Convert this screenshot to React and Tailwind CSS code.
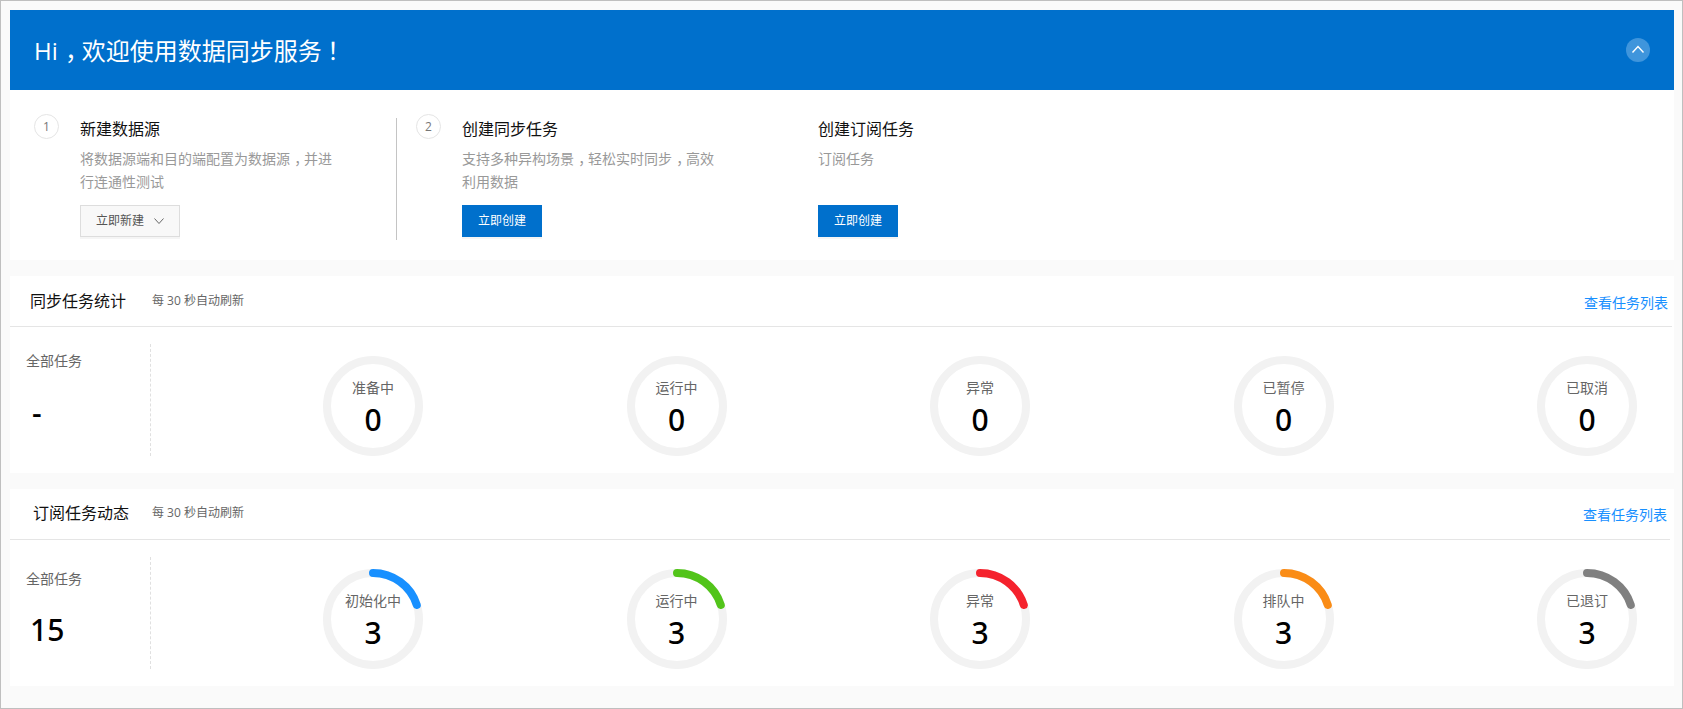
import React from "react";

function ChevronDown() {
  return (
    <svg width="10" height="10" viewBox="0 0 10 10" fill="none" stroke="#666" strokeWidth="1">
      <path d="M0.5 2.5 L5 7.5 L9.5 2.5" />
    </svg>
  );
}

function ChevronUp() {
  return (
    <svg width="14" height="14" viewBox="0 0 14 14" fill="none" stroke="#fff" strokeWidth="1.4" className="-mt-[1px]">
      <path d="M1.5 9.5 L7 3.5 L12.5 9.5" />
    </svg>
  );
}

function Comma() {
  return <span className="inline-block pl-[0.3em] pr-[0.2em] [font-feature-settings:'halt']">，</span>;
}

function Ring({ label, value, color }) {
  return (
    <div className="relative w-[100px] h-[100px] shrink-0 text-center">
      <svg className="absolute inset-0" width="100" height="100" viewBox="0 0 100 100">
        <circle cx="50" cy="50" r="46" fill="none" stroke="#f2f2f2" strokeWidth="8" />
        {color && (
          <circle
            cx="50"
            cy="50"
            r="46"
            fill="none"
            stroke={color}
            strokeWidth="8"
            strokeLinecap="round"
            strokeDasharray="57.8 289"
            transform="rotate(-90 50 50)"
          />
        )}
      </svg>
      <div className="relative pt-[22px] flex flex-col items-center">
        <div className="text-[14px] leading-[20px] text-[#666]">{label}</div>
        <div className="mt-[4px] font-['Noto_Sans',sans-serif] font-medium text-[30px] leading-[36px] text-black">{value}</div>
      </div>
    </div>
  );
}

function Section({ title, titleClass, headShift, linkClass, lineMr, total, totalPl, labelMt, totalMt, rings }) {
  return (
    <section className="bg-white mt-[16px]">
      <div className={"h-[51px] flex items-center border-b border-[#e5e5e5] " + lineMr}>
        <div className={"text-[16px] text-[#111] w-[142px] whitespace-nowrap " + titleClass + " " + headShift}>{title}</div>
        <div className={"text-[12px] text-[#666] whitespace-nowrap " + headShift}>每 30 秒自动刷新</div>
        <a className={"ml-auto text-[14px] text-[#1890ff] whitespace-nowrap " + linkClass}>查看任务列表</a>
      </div>
      <div className="h-[146px] pt-[17px] flex">
        <div className="w-[141px] h-[112px] border-r border-dashed border-[#e0e0e0] pl-[16px]">
          <div className={"text-[14px] leading-[20px] text-[#666] " + labelMt}>全部任务</div>
          <div className={"font-['Noto_Sans',sans-serif] font-medium text-[30px] leading-[36px] text-black " + totalMt + " " + totalPl}>{total}</div>
        </div>
        <div className="flex-1 flex justify-between pl-[172px] pr-[37px] pt-[12px]">
          {rings.map((r) => (
            <Ring key={r.label} {...r} />
          ))}
        </div>
      </div>
    </section>
  );
}

function Step({ n }) {
  return (
    <div className="w-[25px] h-[25px] rounded-full border border-[#e5e5e5] flex items-center justify-center text-[12px] text-[#777] shrink-0">
      {n}
    </div>
  );
}

function Task({ title, desc, button }) {
  return (
    <div>
      <div className="mt-[3px] text-[16px] leading-[24px] text-[#111]">{title}</div>
      <div className="mt-[6px] h-[46px] whitespace-nowrap text-[14px] leading-[23px] text-[#999]">{desc}</div>
      <div className="mt-[12px]">{button}</div>
    </div>
  );
}

export default function App() {
  const s1 = [
    { label: "准备中", value: 0 },
    { label: "运行中", value: 0 },
    { label: "异常", value: 0 },
    { label: "已暂停", value: 0 },
    { label: "已取消", value: 0 },
  ];
  const s2 = [
    { label: "初始化中", value: 3, color: "#1890ff" },
    { label: "运行中", value: 3, color: "#52c41a" },
    { label: "异常", value: 3, color: "#f5222d" },
    { label: "排队中", value: 3, color: "#fa8c16" },
    { label: "已退订", value: 3, color: "#808080" },
  ];
  const createBtn = (
    <button className="w-[80px] h-[32px] bg-[#0070cc] text-white text-[12px] shadow-[0_2px_0_#f5f5f5]">立即创建</button>
  );
  return (
    <div className="h-[709px] w-full border border-[#bfbfbf] bg-[#fafafa] pt-[9px] pl-[9px] pr-[8px] overflow-hidden font-['Open_Sans','Noto_Sans_CJK_SC',sans-serif]">
      <header className="h-[80px] bg-[#0070cc] flex items-center justify-between pl-[24px] pr-[24px]">
        <h1 className="text-[24px] text-white whitespace-pre mt-[2px]">
          Hi<Comma />欢迎使用数据同步服务<span className="inline-block pl-[0.22em] [font-feature-settings:'halt']">！</span>
        </h1>
        <div className="w-[24px] h-[24px] rounded-full bg-[#3f95dc] flex items-center justify-center">
          <ChevronUp />
        </div>
      </header>

      <div className="h-[170px] bg-white pl-[24px] pt-[24px] flex">
        <Step n={1} />
        <div className="ml-[21px] w-[316px] shrink-0">
          <Task
            title="新建数据源"
            desc={
              <>
                <div>将数据源端和目的端配置为数据源<Comma />并进</div>
                <div>行连通性测试</div>
              </>
            }
            button={
              <button className="w-[100px] h-[32px] border border-[#ddd] bg-[#f8f8f8] text-[12px] text-[#555] flex items-center justify-center gap-[10px] shadow-[0_2px_0_#f5f5f5]">
                立即新建 <ChevronDown />
              </button>
            }
          />
        </div>
        <div className="w-px h-[122px] mt-[4px] bg-[#c4c4c4] shrink-0" />
        <div className="ml-[19px]">
          <Step n={2} />
        </div>
        <div className="ml-[21px] w-[356px] shrink-0">
          <Task
            title="创建同步任务"
            desc={
              <>
                <div>支持多种异构场景<Comma />轻松实时同步<Comma />高效</div>
                <div>利用数据</div>
              </>
            }
            button={createBtn}
          />
        </div>
        <div>
          <Task title="创建订阅任务" desc="订阅任务" button={createBtn} />
        </div>
      </div>

      <Section
        title="同步任务统计"
        titleClass="pl-[20px]"
        headShift=""
        linkClass="mr-[4px] mt-[3px]"
        lineMr="mr-[2px]"
        total="-"
        totalPl="pl-[6px]"
        labelMt="mt-[7px]"
        totalMt="mt-[24px]"
        rings={s1}
      />
      <Section
        title="订阅任务动态"
        titleClass="pl-[23px]"
        headShift="-mt-[2px]"
        linkClass="mr-[3px]"
        lineMr="mr-[4px]"
        total="15"
        totalPl="pl-[4px]"
        labelMt="mt-[12px]"
        totalMt="mt-[23px]"
        rings={s2}
      />
    </div>
  );
}
